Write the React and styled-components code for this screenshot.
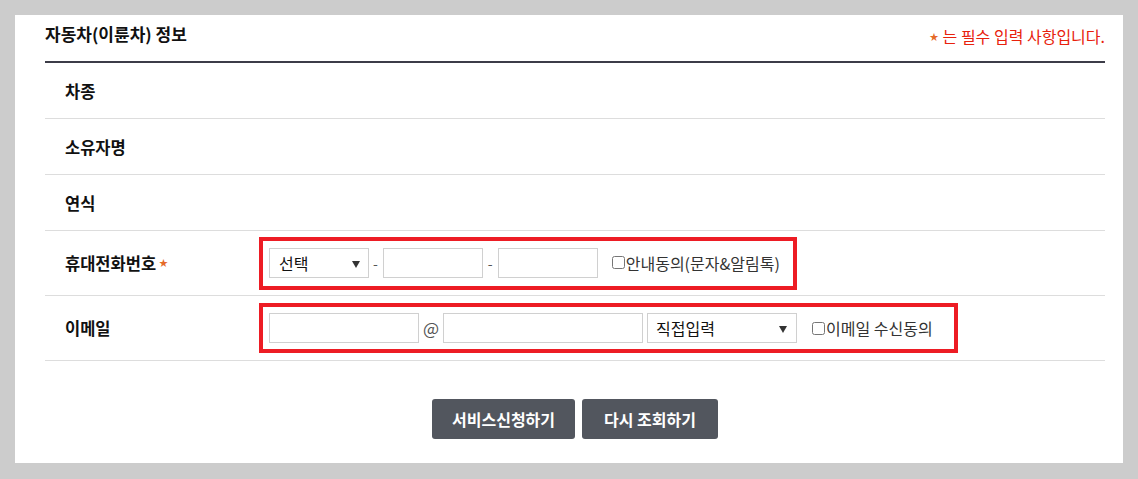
import React from "react";
import styled, { createGlobalStyle } from "styled-components";

const GlobalStyle = createGlobalStyle`
  html, body {
    margin: 0;
    padding: 0;
    background: #cccccc;
    font-family: "Noto Sans CJK KR", "Noto Sans", sans-serif;
  }
  * { box-sizing: border-box; }
`;

const Page = styled.div`
  padding: 15px 15px 16px 15px;
  min-height: 479px;
`;

const Panel = styled.section`
  background: #ffffff;
  padding: 0 18px 24px 30px;
`;

const Header = styled.div`
  height: 48px;
  display: flex;
  align-items: flex-start;
  justify-content: space-between;
  padding-top: 7px;
  border-bottom: 2px solid #3c3c48;
`;

const Title = styled.h2`
  margin: 0;
  font-size: 17px;
  line-height: 24px;
  font-weight: 700;
  color: #111111;
`;

const Note = styled.p`
  margin: 0;
  padding-top: 2px;
  font-size: 16px;
  line-height: 24px;
  color: #e8210c;
  display: flex;
  align-items: center;
`;

const Star = styled.span`
  color: #e56a28;
  font-size: 9px;
  line-height: 1;
  margin: ${(p) => (p.$label ? "0 0 0 3px" : "0 4px 0 0")};
  position: relative;
  top: ${(p) => (p.$label ? "-1px" : "0")};
`;

const Row = styled.div`
  display: flex;
  align-items: center;
  height: ${(p) => (p.$tall ? "65px" : "56px")};
  border-bottom: 1px solid #dddddd;
`;

const Label = styled.div`
  width: 214px;
  flex-shrink: 0;
  padding-left: 20px;
  font-size: 16.5px;
  font-weight: 700;
  color: #111111;
  display: flex;
  align-items: center;
`;

const Highlight = styled.div`
  display: inline-flex;
  align-items: center;
  border: 4px solid #ed1c24;
  padding: ${(p) => p.$pad};
`;

const Input = styled.input`
  width: ${(p) => p.$w}px;
  height: 30px;
  border: 1px solid #d0d0d0;
  border-radius: 0;
  padding: 0 8px;
  font-family: inherit;
  font-size: 14px;
  outline: none;
  background: #fff;
`;

const SelectWrap = styled.div`
  position: relative;
  width: ${(p) => p.$w}px;
  height: 30px;
  margin-left: ${(p) => p.$ml || 0}px;
  &::after {
    content: "";
    position: absolute;
    right: ${(p) => p.$arrowRight}px;
    top: 13px;
    border-left: 4px solid transparent;
    border-right: 4px solid transparent;
    border-top: 7px solid #333333;
    pointer-events: none;
  }
`;

const Select = styled.select`
  appearance: none;
  -webkit-appearance: none;
  width: 100%;
  height: 100%;
  border: 1px solid #d0d0d0;
  border-radius: 0;
  background: #fff;
  padding: 0 0 0 ${(p) => p.$pl}px;
  font-family: inherit;
  font-size: 16px;
  color: #111111;
  outline: none;
`;

const Sep = styled.span`
  font-size: ${(p) => (p.$at ? "17px" : "14px")};
  color: #555555;
  padding: ${(p) => p.$pad};
  line-height: 30px;
`;

const Agree = styled.label`
  display: inline-flex;
  align-items: center;
  margin-left: ${(p) => p.$ml}px;
  font-size: 16px;
  color: #333333;
  white-space: nowrap;
  input {
    width: 13px;
    height: 13px;
    margin: 0 1px 0 0;
  }
`;

const Buttons = styled.div`
  display: flex;
  justify-content: center;
  gap: 7px;
  margin-top: 38px;
`;

const Button = styled.button`
  height: 40px;
  padding: 0 ${(p) => p.$px}px;
  border: none;
  border-radius: 3px;
  background: #52565e;
  color: #ffffff;
  font-family: inherit;
  font-size: 16px;
  font-weight: 700;
  cursor: pointer;
`;

export default function App() {
  return (
    <>
      <GlobalStyle />
      <Page>
        <Panel>
          <Header>
            <Title>자동차(이륜차) 정보</Title>
            <Note>
              <Star>★</Star>는 필수 입력 사항입니다.
            </Note>
          </Header>

          <Row>
            <Label>차종</Label>
          </Row>
          <Row>
            <Label>소유자명</Label>
          </Row>
          <Row>
            <Label>연식</Label>
          </Row>

          <Row $tall>
            <Label>
              휴대전화번호<Star $label>★</Star>
            </Label>
            <Highlight $pad="7px 13px 8px 6px">
              <SelectWrap $w={100} $arrowRight={9}>
                <Select $pl={9} defaultValue="">
                  <option value="">선택</option>
                  <option>010</option>
                  <option>011</option>
                </Select>
              </SelectWrap>
              <Sep $pad="0 5px 0 4px">-</Sep>
              <Input $w={100} />
              <Sep $pad="0 5px 0 5px">-</Sep>
              <Input $w={100} />
              <Agree $ml={14}>
                <input type="checkbox" />
                안내동의(문자&알림톡)
              </Agree>
            </Highlight>
          </Row>

          <Row $tall>
            <Label>이메일</Label>
            <Highlight $pad="6px 21px 6px 6px">
              <Input $w={150} />
              <Sep $at $pad="0 4px 0 4px">@</Sep>
              <Input $w={200} />
              <SelectWrap $w={150} $ml={4} $arrowRight={10}>
                <Select $pl={8} defaultValue="">
                  <option value="">직접입력</option>
                  <option>naver.com</option>
                  <option>gmail.com</option>
                </Select>
              </SelectWrap>
              <Agree $ml={15}>
                <input type="checkbox" />
                이메일 수신동의
              </Agree>
            </Highlight>
          </Row>

          <Buttons>
            <Button $px={20}>서비스신청하기</Button>
            <Button $px={22}>다시 조회하기</Button>
          </Buttons>
        </Panel>
      </Page>
    </>
  );
}
